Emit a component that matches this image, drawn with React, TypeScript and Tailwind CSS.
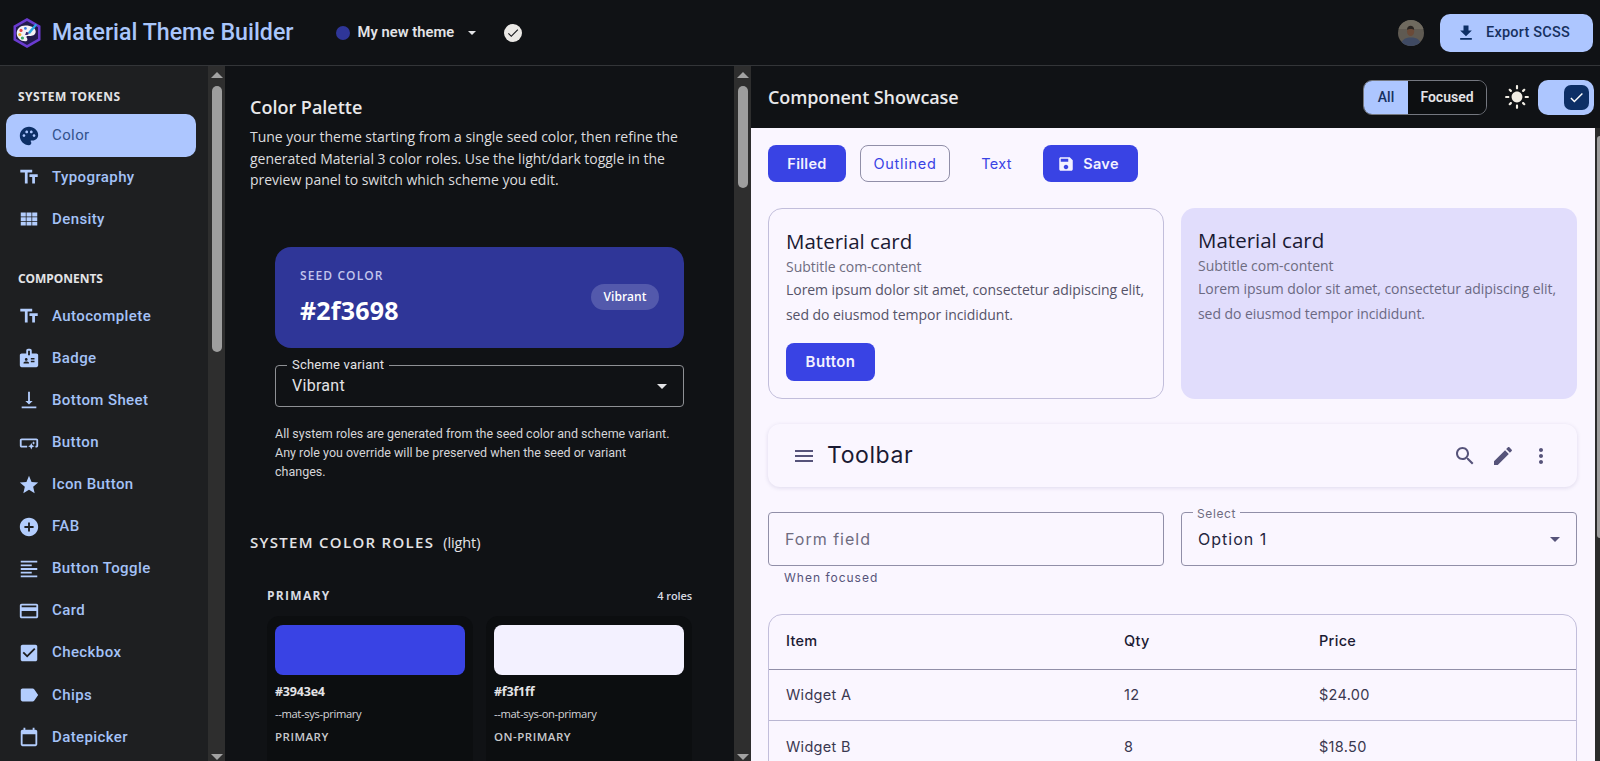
const P: Record<string, string> = {
  palette: "M12 2C6.49 2 2 6.49 2 12s4.49 10 10 10c1.38 0 2.5-1.12 2.5-2.5 0-.61-.23-1.2-.64-1.67-.08-.1-.13-.21-.13-.33 0-.28.22-.5.5-.5H16c3.31 0 6-2.69 6-6 0-4.96-4.49-9-10-9zm5.5 11c-.83 0-1.5-.67-1.5-1.5s.67-1.5 1.5-1.5 1.5.67 1.5 1.5-.67 1.5-1.5 1.5zm-3-4c-.83 0-1.5-.67-1.5-1.5S13.67 6 14.5 6s1.5.67 1.5 1.5S15.33 9 14.5 9zM5 11.5c0-.83.67-1.5 1.5-1.5s1.5.67 1.5 1.5S7.33 13 6.5 13 5 12.33 5 11.5zm6-4c0 .83-.67 1.5-1.5 1.5S8 8.33 8 7.5 8.67 6 9.5 6s1.5.67 1.5 1.5z",
  text: "M2.5 4v3h5v12h3V7h5V4h-13zm19 5h-9v3h3v7h3v-7h3V9z",
  grid: "M3 5h5.5v4.2H3zM9.3 5h5.4v4.2H9.3zM15.5 5H21v4.2h-5.5zM3 10h5.5v4.2H3zM9.3 10h5.4v4.2H9.3zM15.5 10H21v4.2h-5.5zM3 15h5.5v4.2H3zM9.3 15h5.4v4.2H9.3zM15.5 15H21v4.2h-5.5z",
  badge: "M20 7h-5V4c0-1.1-.9-2-2-2h-2c-1.1 0-2 .9-2 2v3H4c-1.1 0-2 .9-2 2v11c0 1.1.9 2 2 2h16c1.1 0 2-.9 2-2V9c0-1.1-.9-2-2-2zM9 12c.83 0 1.5.67 1.5 1.5S9.83 15 9 15s-1.5-.67-1.5-1.5S8.17 12 9 12zm3 6H6v-.75c0-1 2-1.5 3-1.5s3 .5 3 1.5V18zm1-9h-2V4h2v5zm5 7.5h-4V15h4v1.5zm0-3h-4V12h4v1.5z",
  bottom: "M16 13h-3V3h-2v10H8l4 4 4-4zM4 19v2h16v-2H4z",
  button: "M22 9v6c0 1.1-.9 2-2 2h-1v-2h1V9H4v6h6v2H4c-1.1 0-2-.9-2-2V9c0-1.1.9-2 2-2h16c1.1 0 2 .9 2 2zm-7.5 10 1.09-2.41L18 15.5l-2.41-1.09L14.5 12l-1.09 2.41L11 15.5l2.41 1.09L14.5 19zm2.5-5 .62-1.38L19 12l-1.38-.62L17 10l-.62 1.38L15 12l1.38.62L17 14z",
  star: "M12 17.27 18.18 21l-1.64-7.03L22 9.24l-7.19-.61L12 2 9.19 8.63 2 9.24l5.46 4.73L5.82 21z",
  add: "M12 2C6.48 2 2 6.48 2 12s4.48 10 10 10 10-4.48 10-10S17.52 2 12 2zm5 11h-4v4h-2v-4H7v-2h4V7h2v4h4v2z",
  toggle: "M15 15H3v2h12v-2zm0-8H3v2h12V7zM3 13h18v-2H3v2zm0 8h18v-2H3v2zM3 3v2h18V3H3z",
  card: "M20 4H4c-1.11 0-1.99.89-1.99 2L2 18c0 1.11.89 2 2 2h16c1.11 0 2-.89 2-2V6c0-1.11-.89-2-2-2zm0 14H4v-6h16v6zm0-10H4V6h16v2z",
  check: "M19 3H5c-1.11 0-2 .9-2 2v14c0 1.1.89 2 2 2h14c1.11 0 2-.9 2-2V5c0-1.1-.89-2-2-2zm-9 14-5-5 1.41-1.41L10 14.17l7.59-7.59L19 8l-9 9z",
  label: "M17.63 5.84C17.27 5.33 16.67 5 16 5L5 5.01C3.9 5.01 3 5.9 3 7v10c0 1.1.9 1.99 2 1.99L16 19c.67 0 1.27-.33 1.63-.84L22 12l-4.37-6.16z",
  date: "M19 4h-1V2h-2v2H8V2H6v2H5c-1.11 0-1.99.9-1.99 2L3 20c0 1.1.89 2 2 2h14c1.1 0 2-.9 2-2V6c0-1.1-.9-2-2-2zm0 16H5V9h14v11z",
  download: "M19 9h-4V3H9v6H5l7 7 7-7zM5 18v2h14v-2H5z",
  save: "M17 3H5c-1.11 0-2 .9-2 2v14c0 1.1.89 2 2 2h14c1.1 0 2-.9 2-2V7l-4-4zm-5 16c-1.66 0-3-1.34-3-3s1.34-3 3-3 3 1.34 3 3-1.34 3-3 3zm3-10H5V5h10v4z",
  menu: "M3 18h18v-2H3v2zm0-5h18v-2H3v2zm0-7v2h18V6H3z",
  search: "M15.5 14h-.79l-.28-.27C15.41 12.59 16 11.11 16 9.5 16 5.91 13.09 3 9.5 3S3 5.91 3 9.5 5.91 16 9.5 16c1.61 0 3.09-.59 4.23-1.57l.27.28v.79l5 4.99L20.49 19l-4.99-5zm-6 0C7.01 14 5 11.99 5 9.5S7.01 5 9.5 5 14 7.01 14 9.5 11.99 14 9.5 14z",
  edit: "M3 17.25V21h3.75L17.81 9.94l-3.75-3.75L3 17.25zM20.71 7.04c.39-.39.39-1.02 0-1.41l-2.34-2.34c-.39-.39-1.02-.39-1.41 0l-1.83 1.83 3.75 3.75 1.83-1.83z",
  more: "M12 8c1.1 0 2-.9 2-2s-.9-2-2-2-2 .9-2 2 .9 2 2 2zm0 2c-1.1 0-2 .9-2 2s.9 2 2 2 2-.9 2-2-.9-2-2-2zm0 6c-1.1 0-2 .9-2 2s.9 2 2 2 2-.9 2-2-.9-2-2-2z",
  sun: "M12 7c-2.76 0-5 2.24-5 5s2.24 5 5 5 5-2.24 5-5-2.24-5-5-5zM2 13h2c.55 0 1-.45 1-1s-.45-1-1-1H2c-.55 0-1 .45-1 1s.45 1 1 1zm18 0h2c.55 0 1-.45 1-1s-.45-1-1-1h-2c-.55 0-1 .45-1 1s.45 1 1 1zM11 2v2c0 .55.45 1 1 1s1-.45 1-1V2c0-.55-.45-1-1-1s-1 .45-1 1zm0 18v2c0 .55.45 1 1 1s1-.45 1-1v-2c0-.55-.45-1-1-1s-1 .45-1 1zM5.99 4.58c-.39-.39-1.03-.39-1.41 0-.39.39-.39 1.03 0 1.41l1.06 1.06c.39.39 1.03.39 1.41 0s.39-1.03 0-1.41L5.99 4.58zm12.37 12.37c-.39-.39-1.03-.39-1.41 0-.39.39-.39 1.03 0 1.41l1.06 1.06c.39.39 1.03.39 1.41 0 .39-.39.39-1.03 0-1.41l-1.06-1.06zm1.06-10.96c.39-.39.39-1.03 0-1.41-.39-.39-1.03-.39-1.41 0l-1.06 1.06c-.39.39-.39 1.03 0 1.41s1.03.39 1.41 0l1.06-1.06zM7.05 18.36c.39-.39.39-1.03 0-1.41-.39-.39-1.03-.39-1.41 0l-1.06 1.06c-.39.39-.39 1.03 0 1.41s1.03.39 1.41 0l1.06-1.06z",
  tick: "M9 16.17 4.83 12l-1.42 1.41L9 19 21 7l-1.41-1.41z",
};

function Icon({ n, className }: { n: string; className: string }) {
  return (
    <svg viewBox="0 0 24 24" className={className} fill="currentColor">
      <path d={P[n]} fillRule="evenodd" />
    </svg>
  );
}

function Logo() {
  return (
    <svg viewBox="0 0 32 32" className="w-[32px] h-[32px] shrink-0">
      <path d="M16 1 29.5 8.7V23.3L16 31 2.5 23.3V8.7Z" fill="#6a3bd0" />
      <path d="M16 4 27 10.3V21.7L16 28 5 21.7V10.3Z" fill="#221a4d" />
      <path d="M14.5 8.5c-5.3 0-8.8 3.4-8.8 7.8 0 4.6 4 8 8.4 8 1.6 0 2.3-.9 2.3-1.9 0-1.2-1-1.5-1-2.4 0-.8.7-1.1 1.6-1.1h2.7c2.9 0 5-1.8 5-4.4 0-3.7-4.6-6-10.2-6z" fill="#f4f2f5" />
      <circle cx="10" cy="13.4" r="1.6" fill="#e5484d" />
      <circle cx="8.8" cy="17.6" r="1.6" fill="#f2b632" />
      <circle cx="11.4" cy="21" r="1.6" fill="#3fae6a" />
      <circle cx="14.4" cy="11.4" r="1.4" fill="#3d7be0" />
      <path d="M16.8 15.6 24.6 6.6l1.5 1.3-7.2 9z" fill="#2ba9e6" />
      <path d="M15.2 15c1.2-.4 2.6.6 2.6 2-.8 1-2.5 1.3-3.8.7.8-.7.7-1.8 1.2-2.7z" fill="#35266f" />
    </svg>
  );
}

function Avatar() {
  return (
    <svg viewBox="0 0 26 26" className="w-[26px] h-[26px] shrink-0 rounded-full">
      <rect width="26" height="26" fill="#5f5a52" />
      <rect width="26" height="9" fill="#6f6a5f" />
      <path d="M3 26c0-6 4-8.5 10-8.5S23 20 23 26z" fill="#3f4a63" />
      <ellipse cx="12.6" cy="11.5" rx="3.6" ry="4.6" fill="#6a4a38" />
      <path d="M9 10c0-3 1.7-4.2 3.6-4.2S16.2 7 16.2 10c-1.2-1.4-5.6-1.4-7.2 0z" fill="#2a2522" />
    </svg>
  );
}

function Scrollbar({ h }: { h: string }) {
  return (
    <div className="w-[17px] shrink-0 bg-[#2e2e2e] flex flex-col items-center">
      <div className="pt-[6px] pb-[8px]">
        <div className="w-0 h-0 border-l-[6px] border-r-[6px] border-b-[6px] border-l-transparent border-r-transparent border-b-[#a3a3a3]" />
      </div>
      <div className={`${h} w-[10px] rounded-[5px] bg-[#9e9e9e]`} />
      <div className="flex-1" />
      <div className="pb-[1px]">
        <div className="w-0 h-0 border-l-[6px] border-r-[6px] border-t-[6px] border-l-transparent border-r-transparent border-t-[#a3a3a3]" />
      </div>
    </div>
  );
}

function NavItem({ icon, label, active }: { icon: string; label: string; active?: boolean }) {
  return (
    <div
      className={
        active
          ? "h-[43px] ml-[6px] mr-[12px] -mb-[1px] pl-[12px] rounded-[10px] bg-[#adc6ff] text-[#33528c] flex items-center gap-[12px]"
          : "h-[42.1px] ml-[6px] mr-[12px] pl-[12px] text-[#a4c2f7] flex items-center gap-[12px]"
      }
    >
      <Icon n={icon} className={active ? "w-[22px] h-[22px] text-[#0d2f66] shrink-0" : "w-[22px] h-[22px] text-[#b3cdfd] shrink-0"} />
      <span className={active ? "text-[15px] leading-none tracking-[0.4px]" : "text-[15px] font-medium leading-none tracking-[0.4px]"}>{label}</span>
    </div>
  );
}

const poppins = "font-['Inter','Noto_Sans',sans-serif]";

export default function App() {
  return (
    <div className="h-screen w-full overflow-hidden flex flex-col bg-[#101215] font-['Roboto',sans-serif]">
      <header className="h-[66px] shrink-0 border-b border-[#333538] flex items-center pl-[11px] pr-[7px]">
        <Logo />
        <h1 className="ml-[9px] text-[23.2px] font-medium leading-none text-[#a9c6fb]">Material Theme Builder</h1>
        <div className="ml-[42px] w-[14px] h-[14px] rounded-full bg-[#2f3698]" />
        <span className="ml-[8px] text-[14.7px] font-semibold text-[#e3e3e6] tracking-[0.05px]">My new theme</span>
        <div className="ml-[14px] w-0 h-0 border-l-[4.5px] border-r-[4.5px] border-t-[4.5px] border-l-transparent border-r-transparent border-t-[#e3e3e6]" />
        <div className="ml-[28px] w-[18px] h-[18px] rounded-full bg-[#ebe9e6] flex items-center justify-center text-[#1a1b1e]">
          <Icon n="tick" className="w-[14px] h-[14px]" />
        </div>
        <div className="flex-1" />
        <Avatar />
        <button className="ml-[16px] w-[153px] h-[38px] rounded-[10px] bg-[#adc6ff] text-[#17315f] flex items-center justify-center gap-[10px] pr-[7px] text-[14.5px] font-medium tracking-[0.2px]">
          <Icon n="download" className="w-[20px] h-[20px] text-[#0d2f66]" />
          Export SCSS
        </button>
      </header>

      <div className="flex-1 min-h-0 flex">
        <aside className="w-[225px] shrink-0 flex bg-[#1e1f21]">
          <nav className="flex-1 min-w-0 overflow-hidden pt-[24px]">
            <div className="pl-[18px] h-[14px] mb-[10px] flex items-center text-[12px] font-bold tracking-[0.5px] text-[#e3e3e6] font-['Noto_Sans',sans-serif]">SYSTEM TOKENS</div>
            <NavItem icon="palette" label="Color" active />
            <NavItem icon="text" label="Typography" />
            <NavItem icon="grid" label="Density" />
            <div className="pl-[18px] h-[14px] mt-[32px] mb-[9px] flex items-center text-[12px] font-bold tracking-[0px] text-[#e3e3e6] font-['Noto_Sans',sans-serif]">COMPONENTS</div>
            {[
              ["text", "Autocomplete"],
              ["badge", "Badge"],
              ["bottom", "Bottom Sheet"],
              ["button", "Button"],
              ["star", "Icon Button"],
              ["add", "FAB"],
              ["toggle", "Button Toggle"],
              ["card", "Card"],
              ["check", "Checkbox"],
              ["label", "Chips"],
              ["date", "Datepicker"],
            ].map(([i, l]) => (
              <NavItem key={l} icon={i} label={l} />
            ))}
          </nav>
          <Scrollbar h="h-[266px]" />
        </aside>

        <main className="w-[526px] shrink-0 flex bg-[#101215]">
          <div className="flex-1 min-w-0 overflow-hidden pl-[25px] pr-[25px] pt-[28px] font-['Open_Sans',sans-serif]">
            <h2 className="text-[18px] leading-[26px] font-semibold text-[#e8e8ea]">Color Palette</h2>
            <p className="mt-[6px] text-[14px] leading-[21.5px] text-[#dcdcdf] tracking-[-0.02px] w-[440px]">
              Tune your theme starting from a single seed color, then refine the generated Material 3 color roles. Use the light/dark toggle in the preview panel to switch which scheme you edit.
            </p>
            <div className="mx-[25px] mt-[56px]">
              <div className="h-[101px] rounded-[16px] bg-[#2f3698] px-[25px] flex items-center justify-between">
                <div>
                  <div className="text-[12px] leading-[16px] font-semibold tracking-[1.1px] text-[#c2c5ec]">SEED COLOR</div>
                  <div className="mt-[10px] text-[25px] leading-[32px] font-bold text-white tracking-[0.2px]">#2f3698</div>
                </div>
                <div className="h-[26px] w-[68px] rounded-full bg-[#5359ac] text-white text-[12px] font-semibold flex items-center justify-center">Vibrant</div>
              </div>
              <div className="relative mt-[17px] h-[42px] rounded-[4px] border border-[#8e9094] flex items-center justify-between pl-[16px] pr-[16px] pt-[1px] font-['Roboto',sans-serif]">
                <span className="absolute left-[11px] -top-[9px] px-[5px] bg-[#101215] text-[13px] leading-[16px] text-[#e3e3e6] tracking-[0.2px]">Scheme variant</span>
                <span className="text-[16px] text-[#e3e3e6] tracking-[0.3px]">Vibrant</span>
                <div className="w-0 h-0 border-l-[5px] border-r-[5px] border-t-[5px] border-l-transparent border-r-transparent border-t-[#e3e3e6]" />
              </div>
              <p className="mt-[17px] pr-[8px] text-[12.5px] leading-[19px] text-[#d5d5d8] font-['Roboto',sans-serif]">
                All system roles are generated from the seed color and scheme variant. Any role you override will be preserved when the seed or variant changes.
              </p>
            </div>
            <div className="mt-[50px] flex items-baseline text-[#e3e3e6]">
              <span className="text-[15px] font-semibold tracking-[1.3px]">SYSTEM COLOR ROLES</span>
              <span className="ml-[9px] text-[14.5px] tracking-[-0.1px]">(light)</span>
            </div>
            <div className="mt-[35px] ml-[17px] w-[425px] flex items-center justify-between h-[16px]">
              <span className="text-[12px] font-bold tracking-[1.3px] text-[#d8dbe2]">PRIMARY</span>
              <span className="text-[11px] font-semibold text-[#d8dbe2] tracking-[-0.1px]">4 roles</span>
            </div>
            <div className="mt-[12px] ml-[17px] w-[425px] grid grid-cols-2 gap-[13px]">
              {[
                ["#3943e4", "--mat-sys-primary", "PRIMARY", "bg-[#3943e4]"],
                ["#f3f1ff", "--mat-sys-on-primary", "ON-PRIMARY", "bg-[#f3f1ff]"],
              ].map(([hex, v, role, bg]) => (
                <div key={role} className="rounded-[12px] bg-[#0c0e10] px-[8px] pt-[9px] h-[190px]">
                  <div className={`h-[50px] rounded-[8px] ${bg}`} />
                  <div className="mt-[8px] text-[12.5px] leading-[17px] font-bold text-[#e3e3e6] tracking-[-0.2px]">{hex}</div>
                  <div className="mt-[6px] text-[11.2px] leading-[16px] text-[#d5d5d8] tracking-[-0.35px]">{v}</div>
                  <div className="mt-[6px] text-[11.5px] leading-[17px] font-semibold tracking-[0.5px] text-[#c8c9cc]">{role}</div>
                </div>
              ))}
            </div>
          </div>
          <Scrollbar h="h-[102px]" />
        </main>

        <section className="flex-1 min-w-0 flex flex-col relative">
          <div className="h-[62px] shrink-0 bg-[#101215] flex items-center pl-[17px] pr-[6px]">
            <h2 className="text-[18px] font-semibold text-[#e8e8ea] tracking-[-0.1px] font-['Open_Sans',sans-serif]">Component Showcase</h2>
            <div className="flex-1" />
            <div className="h-[35px] w-[124px] rounded-[9px] border border-[#74777f] flex overflow-hidden text-[14px] font-semibold">
              <div className="w-[44px] bg-[#adc6ff] text-[#17315f] flex items-center justify-center font-medium">All</div>
              <div className="flex-1 bg-[#0d0f11] text-[#e3e3e6] flex items-center justify-center">Focused</div>
            </div>
            <Icon n="sun" className="ml-[17px] w-[26px] h-[26px] text-[#f1ede4]" />
            <div className="ml-[8px] w-[56px] h-[35px] rounded-[10px] bg-[#adc6ff] flex items-center justify-end pr-[5px]">
              <div className="w-[25px] h-[25px] rounded-[7px] bg-[#0d2f66] flex items-center justify-center text-white">
                <Icon n="tick" className="w-[17px] h-[17px]" />
              </div>
            </div>
          </div>

          <div className={`flex-1 min-h-0 overflow-hidden bg-[#faf6ff] mr-[5px] pl-[17px] pr-[18px] pt-[17px] ${poppins}`}>
            <div className="flex items-center text-[14.5px] font-medium tracking-[0.3px]">
              <button className="w-[78px] h-[37px] rounded-[8px] bg-[#3943e4] text-[#f3f1ff] font-semibold">Filled</button>
              <button className="ml-[14px] w-[90px] h-[37px] rounded-[8px] border border-[#918fa8] text-[#3943e4] font-normal tracking-[0.7px]">Outlined</button>
              <button className="ml-[14px] w-[65px] h-[37px] text-[#3943e4] font-normal">Text</button>
              <button className="ml-[14px] w-[95px] h-[37px] rounded-[8px] bg-[#3943e4] text-[#f3f1ff] font-semibold flex items-center justify-center gap-[8px] pr-[5px]">
                <Icon n="save" className="w-[18px] h-[18px]" />
                Save
              </button>
            </div>

            <div className="mt-[26px] grid grid-cols-2 gap-[17px] font-['Open_Sans',sans-serif]">
              <div className="h-[191px] rounded-[14px] border border-[#c2bedb] px-[17px] pt-[17px]">
                <div className="text-[20.5px] leading-[30px] text-[#1a1a33]">Material card</div>
                <div className="text-[14px] leading-[21px] text-[#6e6c80] tracking-[-0.03px]">Subtitle com-content</div>
                <p className="text-[14px] leading-[25px] text-[#555368] tracking-[-0.05px]">Lorem ipsum dolor sit amet, consectetur adipiscing elit, sed do eiusmod tempor incididunt.</p>
                <button className={`mt-[16px] w-[89px] h-[38px] rounded-[8px] bg-[#3943e4] text-[#f3f1ff] text-[15px] font-semibold tracking-[0.4px] ${poppins}`}>Button</button>
              </div>
              <div className="h-[191px] rounded-[14px] bg-[#e1ddfc] px-[17px] pt-[17px]">
                <div className="text-[20.5px] leading-[30px] text-[#1a1a33]">Material card</div>
                <div className="text-[14px] leading-[21px] text-[#6e6c80] tracking-[-0.03px]">Subtitle com-content</div>
                <p className="text-[14px] leading-[25px] text-[#6b6983] tracking-[-0.05px]">Lorem ipsum dolor sit amet, consectetur adipiscing elit, sed do eiusmod tempor incididunt.</p>
              </div>
            </div>

            <div className="mt-[25px] h-[63px] rounded-[12px] shadow-[0_1px_4px_rgba(60,50,120,0.14)] flex items-center pl-[24px] pr-[24px]">
              <Icon n="menu" className="w-[24px] h-[24px] text-[#56537a]" />
              <span className="ml-[11px] text-[23px] text-[#1a1a33] tracking-[0.6px]">Toolbar</span>
              <div className="flex-1" />
              <Icon n="search" className="w-[24px] h-[24px] text-[#56537a]" />
              <Icon n="edit" className="ml-[14px] w-[24px] h-[24px] text-[#56537a]" />
              <Icon n="more" className="ml-[14px] w-[24px] h-[24px] text-[#56537a]" />
            </div>

            <div className="mt-[25px] grid grid-cols-2 gap-[17px]">
              <div>
                <div className="h-[54px] rounded-[4px] border border-[#918fa8] flex items-center pl-[16px] text-[16px] text-[#6e6c80] tracking-[1px]">Form field</div>
                <div className="mt-[4px] pl-[16px] text-[12px] leading-[16px] text-[#56537a] tracking-[1px]">When focused</div>
              </div>
              <div className="relative h-[54px] rounded-[4px] border border-[#918fa8] flex items-center justify-between pl-[16px] pr-[16px]">
                <span className="absolute left-[11px] -top-[6px] px-[4px] bg-[#faf6ff] text-[12px] leading-[14px] text-[#6e6c80] tracking-[0.6px]">Select</span>
                <span className="text-[16px] text-[#26263f] tracking-[1px]">Option 1</span>
                <div className="w-0 h-0 border-l-[5.5px] border-r-[5.5px] border-t-[5.5px] border-l-transparent border-r-transparent border-t-[#56537a]" />
              </div>
            </div>

            <div className="mt-[28px] rounded-t-[14px] border border-[#c2bedb] text-[14.5px] tracking-[0.3px] text-[#3a3850] h-[200px]">
              <div className="h-[55px] grid grid-cols-[338px_195px_1fr] items-center pl-[17px] pb-[2px] border-b border-[#918fa8] font-medium text-[#1a1a33]">
                <span>Item</span>
                <span>Qty</span>
                <span>Price</span>
              </div>
              <div className="h-[51px] grid grid-cols-[338px_195px_1fr] items-center pl-[17px] border-b border-[#b9b6d2]">
                <span>Widget A</span>
                <span>12</span>
                <span>$24.00</span>
              </div>
              <div className="h-[51px] grid grid-cols-[338px_195px_1fr] items-center pl-[17px]">
                <span>Widget B</span>
                <span>8</span>
                <span>$18.50</span>
              </div>
            </div>
          </div>
          <div className="absolute right-0 top-[62px] bottom-0 w-[5px] bg-[#2b2b2b]">
            <div className="ml-[2px] mt-[8px] h-[402px] bg-[#9e9e9e] rounded-l-[3px]" />
          </div>
        </section>
      </div>
    </div>
  );
}
